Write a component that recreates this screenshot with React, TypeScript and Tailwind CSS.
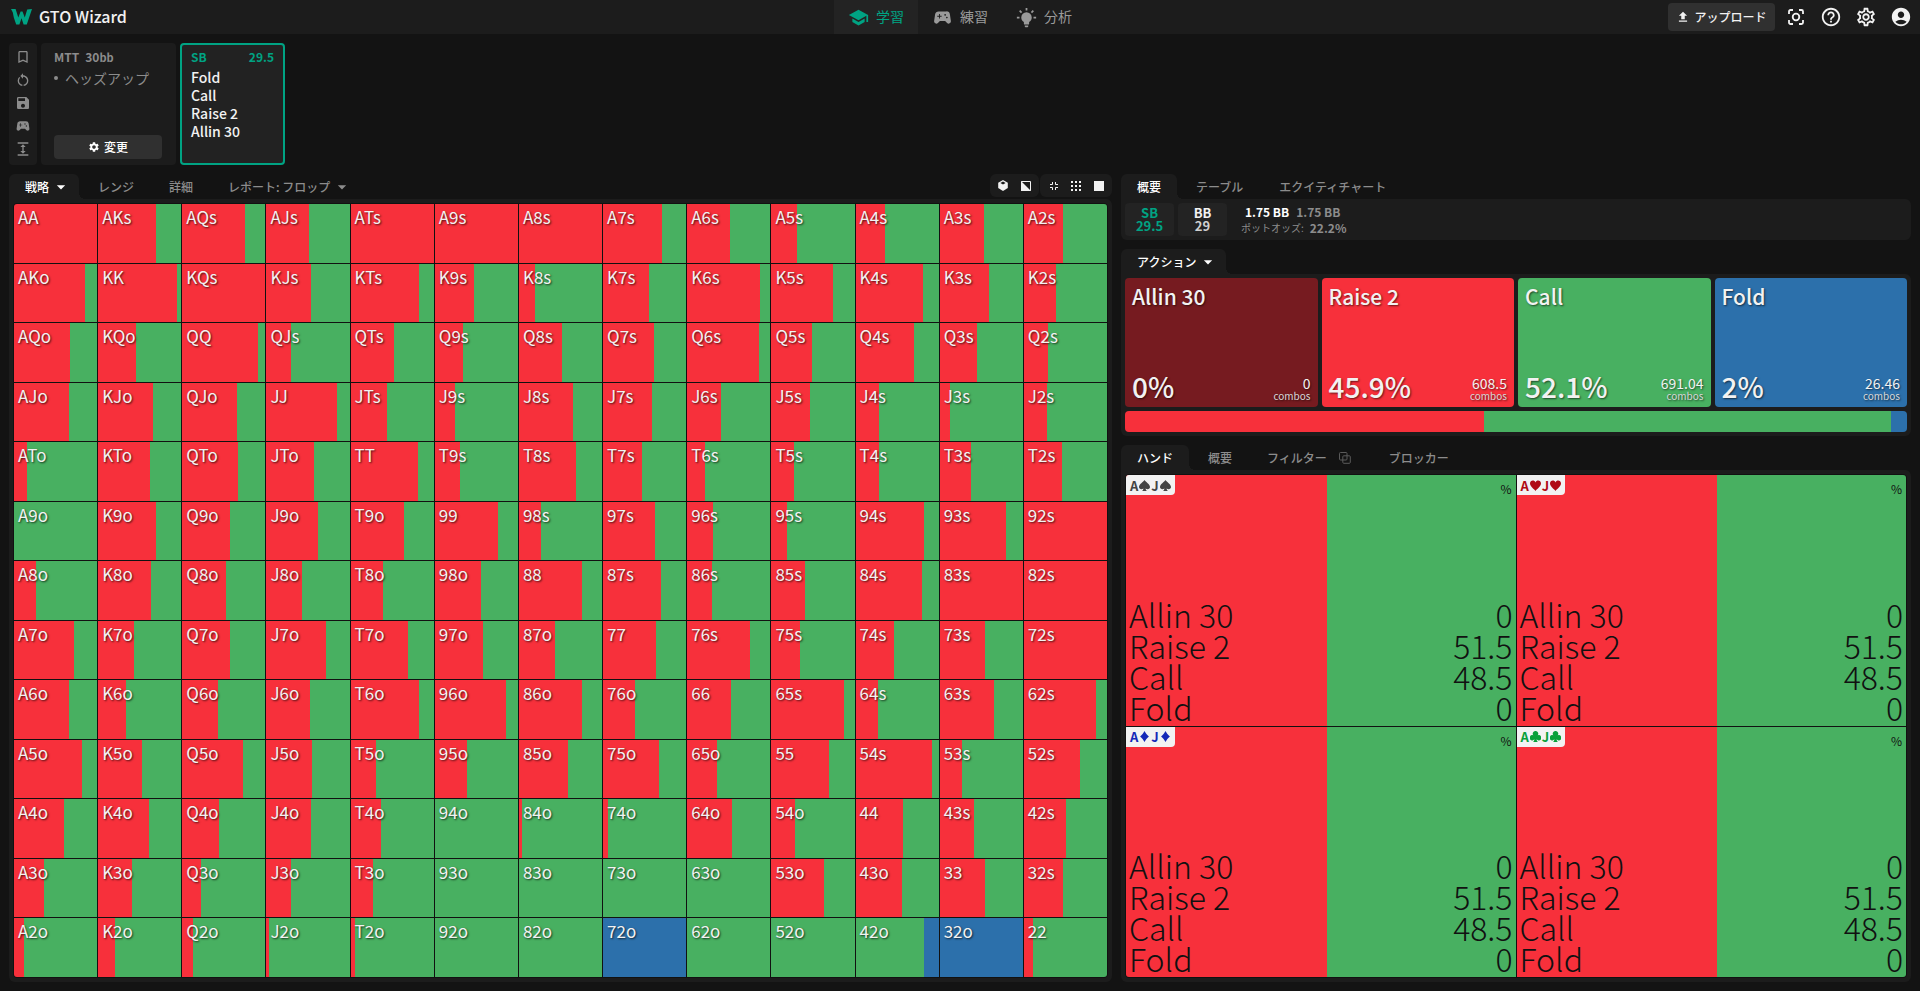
import type { CSSProperties, ReactNode } from "react";
import {
  MdAccountCircle,
  MdArrowDropDown,
  MdBookmarkBorder,
  MdExpand,
  MdHelpOutline,
  MdOutlineSettings,
  MdRestartAlt,
  MdSave,
  MdSchool,
  MdSettings,
  MdSportsEsports,
  MdUpload,
} from "react-icons/md";

const RED = "#f7303b";
const GREEN = "#48b061";
const BLUE = "#2c70ab";
const RANKS = "AKQJT98765432".split("");

// Raise frequency per hand, row by row; the remainder is Call unless listed in FOLD.
const RAISE: number[][] = [
  [100, 70, 75.5, 51.5, 100, 100, 100, 71.5, 51.5, 31, 35, 53.5, 46.5],
  [85, 95, 100, 53.5, 82.5, 46.5, 19.5, 56, 88.5, 74, 81, 58.5, 38],
  [67, 46, 91, 30, 52, 33.5, 52, 62, 87, 49, 69.5, 44.5, 29],
  [66, 66, 66, 85, 43, 24, 65, 59.5, 40.5, 46.5, 27.5, 11.5, 27.5],
  [15.5, 62.5, 67, 57.5, 80.5, 30, 68.5, 46.5, 21.5, 27.5, 28, 37, 45.5],
  [0, 70, 57.5, 61.5, 63.5, 76.5, 26, 63, 31, 19.5, 81.5, 79, 100],
  [26.5, 64, 53.5, 43, 38.5, 55, 76, 70, 30, 40, 79, 100, 100],
  [72, 43, 57.5, 72, 68.5, 58, 43, 64, 76.5, 34.5, 45.5, 54, 100],
  [66, 34, 43, 52.5, 81.5, 85, 76, 38, 52.5, 87.5, 26.5, 65.5, 87],
  [81.5, 52.5, 73, 55, 30, 38.5, 59, 68, 36, 69.5, 91, 26.5, 68],
  [60, 62, 45, 54, 36, 0, 4, 5.5, 54.5, 28.5, 56.5, 40.5, 50],
  [36, 41, 23, 30, 26.5, 0, 0, 0, 0, 63.5, 56, 54, 46.5],
  [12, 20.5, 13, 3.5, 4.5, 0, 0, 0, 0, 0, 0, 0, 11],
];
const FOLD: Record<string, number> = { "72o": 100, "32o": 100, "42o": 18.5 };

function split(raise: number, fold = 0): CSSProperties {
  const callEnd = 100 - fold;
  return {
    background: `linear-gradient(to right, ${RED} ${raise}%, ${GREEN} ${raise}%, ${GREEN} ${callEnd}%, ${BLUE} ${callEnd}%)`,
  };
}

function handName(row: number, col: number) {
  if (row === col) return RANKS[row] + RANKS[row];
  return row < col ? RANKS[row] + RANKS[col] + "s" : RANKS[col] + RANKS[row] + "o";
}

function Logo() {
  return (
    <svg viewBox="0 0 21 16" className="h-4 w-[21px]" aria-hidden="true">
      <path
        fill="#00a383"
        d="M0 0h4.600l2.700 8.600L9.600 2.400h1.900l2.300 6.200L16.200.6 21 0l-5.200 15.500h-3.200L10.500 9.300 8.400 15.500H5.200L2.800 8.500 1.800 3.600z"
      />
    </svg>
  );
}

function BulbIcon() {
  return (
    <svg viewBox="0 0 24 24" className="size-[21px] fill-current" aria-hidden="true">
      <path d="M12,6A6,6 0 0,1 18,12C18,14.22 16.79,16.16 15,17.2V19A1,1 0 0,1 14,20H10A1,1 0 0,1 9,19V17.2C7.21,16.16 6,14.22 6,12A6,6 0 0,1 12,6M14,21V22A1,1 0 0,1 13,23H11A1,1 0 0,1 10,22V21H14M20,11H23V13H20V11M1,11H4V13H1V11M13,1V4H11V1H13M4.92,3.5L7.05,5.64L5.63,7.05L3.5,4.93L4.92,3.5M16.95,5.63L19.07,3.5L20.5,4.93L18.37,7.05L16.95,5.63Z" />
    </svg>
  );
}

function FocusIcon() {
  return (
    <svg viewBox="0 0 16 16" className="size-4" fill="none" stroke="currentColor" strokeWidth="1.8" aria-hidden="true">
      <path d="M1 5V2.500A1.500 1.500 0 0 1 2.500 1H5M11 1h2.500A1.500 1.500 0 0 1 15 2.500V5M15 11v2.500a1.500 1.500 0 0 1-1.500 1.500H11M5 15H2.500A1.500 1.500 0 0 1 1 13.500V11" />
      <circle cx="8" cy="8" r="3.300" />
    </svg>
  );
}

function CubeIcon() {
  return (
    <svg viewBox="0 0 10 11" className="h-[11px] w-2.5" aria-hidden="true">
      <path fill="currentColor" d="M5 0l4.800 2.700v5.400L5 11 .2 8.100V2.700z" />
      <path fill="#1c1c1c" d="M5 1.600l2.600 1.500L5 4.600 2.400 3.100z" />
    </svg>
  );
}

function HalfIcon() {
  return (
    <svg viewBox="0 0 10 10" className="size-2.5" aria-hidden="true">
      <path fill="none" stroke="currentColor" d="M.5.5h9v9h-9z" />
      <path fill="currentColor" d="M0 0l10 10H0z" />
    </svg>
  );
}

function CollapseIcon() {
  return (
    <svg viewBox="0 0 8 8" className="size-2" fill="none" stroke="currentColor" aria-hidden="true">
      <path d="M2.500 0v2.500H0M5.500 0v2.500H8M2.500 8V5.500H0M5.500 8V5.500H8" />
    </svg>
  );
}

function DotsIcon() {
  return (
    <svg viewBox="0 0 10 10" className="size-2.5 fill-current" aria-hidden="true">
      {[0, 4, 8].map((y) => [0, 4, 8].map((x) => <rect key={`${x}-${y}`} x={x} y={y} width="2" height="2" />))}
    </svg>
  );
}

function OverlapIcon() {
  return (
    <svg viewBox="0 0 12 12" className="size-3" fill="none" stroke="#5a5a5a" aria-hidden="true">
      <rect x=".5" y=".5" width="7.500" height="7.500" rx="1" />
      <rect x="3.800" y="3.800" width="7.500" height="7.500" rx="1" />
    </svg>
  );
}

const SUITS: Record<string, string> = {
  spade: "M5 0C6 1.800 10 3.800 10 6.400 10 8.300 7.600 9 6 7.700 6.100 8.800 6.500 9.500 7.200 10H2.800C3.500 9.500 3.900 8.800 4 7.700 2.400 9 0 8.300 0 6.400 0 3.800 4 1.800 5 0z",
  heart: "M5 10C3.500 8 0 6 0 3 0 0 4-.6 5 2.200 6-.6 10 0 10 3c0 3-3.500 5-5 7z",
  diamond: "M5 0c1 2 2.300 3.600 4 5-1.700 1.400-3 3-4 5C4 8 2.700 6.400 1 5 2.700 3.600 4 2 5 0z",
  club: "M5 0a2.400 2.400 0 0 1 2 3.900A2.400 2.400 0 1 1 6 7.600C6.100 8.800 6.500 9.500 7.200 10H2.800C3.500 9.500 3.900 8.800 4 7.600A2.400 2.400 0 1 1 3 3.900 2.400 2.400 0 0 1 5 0z",
};

function Suit({ name }: { name: string }) {
  return (
    <svg viewBox="0 0 10 10" className="size-[11px] fill-current" role="img" aria-label={name}>
      <path d={SUITS[name]} />
    </svg>
  );
}

function Tab({ active = false, className = "", children }: { active?: boolean; className?: string; children: ReactNode }) {
  const look = active
    ? "relative rounded-t-md bg-[#1c1c1c] text-white after:absolute after:bottom-0 after:left-full after:size-1.5 after:bg-[radial-gradient(circle_at_100%_0,#131313_6px,#1c1c1c_6px)]"
    : "text-[#8c8c8c]";
  return (
    <button type="button" role="tab" aria-selected={active} className={`flex h-[25px] items-center px-4 text-xs font-medium ${look} ${className}`}>
      {children}
    </button>
  );
}

function NavLink({ active = false, icon, children }: { active?: boolean; icon: ReactNode; children: ReactNode }) {
  return (
    <a href="#" className={`flex h-full w-[84px] items-center justify-center gap-[7px] text-sm ${active ? "bg-[#232323] text-[#00a383]" : "text-[#9a9a9a]"}`}>
      {icon}
      <span className="pb-0.5">{children}</span>
    </a>
  );
}

function Header() {
  return (
    <header className="grid h-[34px] grid-cols-[1fr_auto_1fr] items-center bg-[#1c1c1c]">
      <a href="#" className="flex items-center gap-[7px] pl-[11px] text-base font-medium leading-none">
        <Logo />
        <span className="pb-[3px]">GTO Wizard</span>
      </a>
      <nav className="flex h-full">
        <NavLink active icon={<MdSchool className="size-[21px]" />}>学習</NavLink>
        <NavLink icon={<MdSportsEsports className="size-[21px]" />}>練習</NavLink>
        <NavLink icon={<BulbIcon />}>分析</NavLink>
      </nav>
      <div className="flex items-center justify-end gap-[13px] pb-px pr-2">
        <button type="button" className="-mr-[3px] flex h-7 w-[107px] items-center justify-center gap-1 rounded bg-[#303030] text-xs font-medium">
          <MdUpload className="size-3.5" />
          アップロード
        </button>
        <button type="button" aria-label="フォーカス" className="flex size-[22px] items-center justify-center"><FocusIcon /></button>
        <button type="button" aria-label="ヘルプ"><MdHelpOutline className="size-[22px]" /></button>
        <button type="button" aria-label="設定"><MdOutlineSettings className="size-[22px]" /></button>
        <button type="button" aria-label="アカウント"><MdAccountCircle className="size-[22px]" /></button>
      </div>
    </header>
  );
}

function SpotBar() {
  const tools: [string, ReactNode][] = [
    ["ブックマーク", <MdBookmarkBorder className="size-4" />],
    ["リセット", <MdRestartAlt className="size-4" />],
    ["保存", <MdSave className="size-4" />],
    ["練習", <MdSportsEsports className="size-4" />],
    ["展開", <MdExpand className="size-4" />],
  ];
  return (
    <section className="flex h-[122px] gap-1">
      <div className="flex w-7 flex-col items-center justify-between rounded bg-[#1c1c1c] pb-2 pt-1.5 text-[#8c8c8c]">
        {tools.map(([label, icon]) => (
          <button key={label} type="button" aria-label={label}>{icon}</button>
        ))}
      </div>
      <div className="flex w-[135px] flex-col rounded bg-[#1c1c1c] px-[13px] py-1.5 text-[#8c8c8c]">
        <p className="flex gap-1.5 text-xs font-bold leading-4">
          <span>MTT</span>
          <span>30<span className="text-[11px]">bb</span></span>
        </p>
        <p className="flex items-center gap-[7px] pt-[3px] text-sm leading-5">
          <span className="size-1 rounded-full bg-current" />
          ヘッズアップ
        </p>
        <button type="button" className="mt-auto flex h-6 w-[108px] items-center justify-center gap-1 rounded bg-[#303030] text-xs font-medium text-white">
          <MdSettings className="size-3" />
          変更
        </button>
      </div>
      <div className="w-[105px] rounded border-2 border-[#00a383] bg-[#222222] px-[9px] py-1">
        <p className="flex justify-between text-xs font-bold leading-4 text-[#00a383]">
          <span>SB</span>
          <span>29.5</span>
        </p>
        <ul className="pt-[3px] text-sm font-medium leading-[18px]">
          {["Fold", "Call", "Raise 2", "Allin 30"].map((action) => <li key={action}>{action}</li>)}
        </ul>
      </div>
    </section>
  );
}

function StrategyPanel() {
  return (
    <section className="flex min-w-0 flex-col">
      <div className="flex justify-between">
        <div role="tablist" className="flex">
          <Tab active className="gap-0.5 pr-2"><span>戦略</span><MdArrowDropDown className="size-5" /></Tab>
          <Tab className="ml-[3px]">レンジ</Tab>
          <Tab className="ml-[3px]">詳細</Tab>
          <Tab className="ml-[3px] gap-0.5"><span>レポート: フロップ</span><MdArrowDropDown className="size-5" /></Tab>
        </div>
        <div className="flex h-[23px] gap-px">
          <div className="flex items-center gap-[13px] rounded-md bg-[#1c1c1c] px-2">
            <button type="button" aria-label="立体表示"><CubeIcon /></button>
            <button type="button" aria-label="分割表示"><HalfIcon /></button>
          </div>
          <div className="flex items-center gap-[13px] rounded-md bg-[#1c1c1c] pl-2.5 pr-2">
            <button type="button" aria-label="縮小"><CollapseIcon /></button>
            <button type="button" aria-label="グリッド"><DotsIcon /></button>
            <button type="button" aria-label="全体" className="size-2.5 bg-[#f2f2f2]" />
          </div>
        </div>
      </div>
      <div className="flex flex-1 rounded-b-md rounded-tr-md bg-[#1c1c1c] p-1">
        <div className="grid flex-1 auto-rows-fr grid-cols-13 gap-px overflow-hidden rounded border border-[#111111] bg-[#111111]">
          {RANKS.map((_, row) =>
            RANKS.map((_, col) => {
              const name = handName(row, col);
              const fold = FOLD[name] ?? 0;
              return (
                <button
                  key={name}
                  type="button"
                  style={split(RAISE[row][col], fold)}
                  className="flex min-w-0 items-start px-1 pt-px text-[17px] leading-6 text-[#f2f2f2] [text-shadow:1px_1px_2px_rgba(0,0,0,0.7)]"
                >
                  {name}
                </button>
              );
            }),
          )}
        </div>
      </div>
    </section>
  );
}

const ACTIONS = [
  { name: "Allin 30", pct: "0%", combos: "0", bg: "bg-[#761b20]" },
  { name: "Raise 2", pct: "45.9%", combos: "608.5", bg: "bg-[#f7303b]" },
  { name: "Call", pct: "52.1%", combos: "691.04", bg: "bg-[#48b061]" },
  { name: "Fold", pct: "2%", combos: "26.46", bg: "bg-[#2c70ab]" },
];

const COMBOS = [
  { suit: "spade", color: "text-[#444444]" },
  { suit: "heart", color: "text-[#b00a14]" },
  { suit: "diamond", color: "text-[#1428b8]" },
  { suit: "club", color: "text-[#08a03a]" },
];

const FREQUENCIES = [["Allin 30", "0"], ["Raise 2", "51.5"], ["Call", "48.5"], ["Fold", "0"]];

function ComboCell({ suit, color }: { suit: string; color: string }) {
  return (
    <article style={split(51.5)} className="flex flex-col justify-between text-[#111111]">
      <div className="flex justify-between">
        <span className={`flex h-5 items-center gap-px rounded-br bg-[#f2f2f2] px-1 text-[13px] font-bold leading-none ${color}`}>
          A<Suit name={suit} />J<Suit name={suit} />
        </span>
        <span className="pr-1 pt-1.5 text-xs leading-4">%</span>
      </div>
      <dl className="px-[3px] pb-[3px] text-[32px] font-light leading-[31px]">
        {FREQUENCIES.map(([action, value]) => (
          <div key={action} className="flex justify-between">
            <dt>{action}</dt>
            <dd>{value}</dd>
          </div>
        ))}
      </dl>
    </article>
  );
}

function DetailColumn() {
  return (
    <div className="flex min-w-0 flex-col gap-[9px]">
      <section>
        <div role="tablist" className="flex">
          <Tab active>概要</Tab>
          <Tab className="ml-[3px]">テーブル</Tab>
          <Tab className="ml-1">エクイティチャート</Tab>
        </div>
        <div className="flex h-[41px] gap-1 rounded-b-md rounded-tr-md bg-[#1c1c1c] p-1">
          <button type="button" className="w-[49px] rounded bg-[#232323] pb-px text-[13px] font-bold leading-[13px] text-[#00a383]">
            SB<br />29.5
          </button>
          <button type="button" className="w-[49px] rounded bg-[#232323] pb-px text-[13px] font-bold leading-[13px]">
            BB<br /><span className="text-[#d0d0d0]">29</span>
          </button>
          <div className="pl-2.5 pt-px text-xs leading-4 text-[#8c8c8c]">
            <p className="flex gap-[7px] pl-1 font-bold">
              <span className="text-white">1.75 BB</span>
              <span>1.75 BB</span>
            </p>
            <p className="flex items-center gap-1.5">
              <span className="text-[10px]">ポットオッズ:</span>
              <span className="font-bold">22.2%</span>
            </p>
          </div>
        </div>
      </section>

      <section>
        <div role="tablist" className="flex">
          <Tab active className="gap-0.5 pr-2"><span>アクション</span><MdArrowDropDown className="size-5" /></Tab>
        </div>
        <div className="flex flex-col gap-1 rounded-b-md rounded-tr-md bg-[#1c1c1c] p-1">
          <div className="grid h-[129px] grid-cols-4 gap-1">
            {ACTIONS.map((a) => (
              <button
                key={a.name}
                type="button"
                className={`flex flex-col justify-between rounded px-[7px] pb-[5px] pt-1 text-left text-[#f2f2f2] [text-shadow:1px_1px_2px_rgba(0,0,0,0.6)] ${a.bg}`}
              >
                <span className="text-[21px] font-medium leading-7">{a.name}</span>
                <span className="flex w-full items-end justify-between">
                  <span className="text-[28px] font-medium leading-8">{a.pct}</span>
                  <span className="flex flex-col text-right text-sm leading-[14px]">
                    {a.combos}
                    <span className="text-[10px] leading-3 text-[#d8d8d8]">combos</span>
                  </span>
                </span>
              </button>
            ))}
          </div>
          <div style={split(45.9, 2)} className="h-[21px] rounded" />
        </div>
      </section>

      <section className="flex flex-1 flex-col">
        <div role="tablist" className="flex">
          <Tab active>ハンド</Tab>
          <Tab className="ml-[3px]">概要</Tab>
          <Tab className="ml-[3px] gap-3"><span>フィルター</span><OverlapIcon /></Tab>
          <Tab className="ml-1.5">ブロッカー</Tab>
        </div>
        <div className="flex flex-1 rounded-b-md rounded-tr-md bg-[#1c1c1c] p-1">
          <div className="grid flex-1 auto-rows-fr grid-cols-2 gap-px overflow-hidden rounded border border-[#111111] bg-[#111111]">
            {COMBOS.map((c) => <ComboCell key={c.suit} {...c} />)}
          </div>
        </div>
      </section>
    </div>
  );
}

export default function App() {
  return (
    <div className="flex min-h-screen flex-col bg-[#131313] font-['Noto_Sans_CJK_JP',sans-serif] text-[#f2f2f2]">
      <Header />
      <main className="flex flex-1 flex-col gap-[9px] p-[9px]">
        <SpotBar />
        <div className="grid flex-1 grid-cols-[1103fr_790fr] gap-[9px]">
          <StrategyPanel />
          <DetailColumn />
        </div>
      </main>
    </div>
  );
}
